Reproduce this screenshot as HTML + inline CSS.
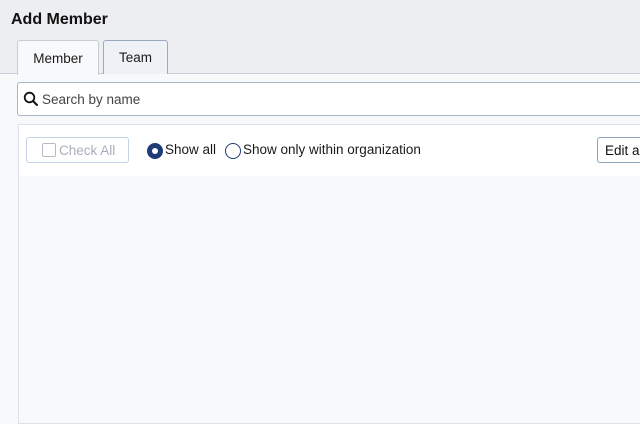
<!DOCTYPE html>
<html><head><style>
*{margin:0;padding:0;box-sizing:border-box}
body{width:640px;height:400px;overflow:hidden;background:#f8f9fb;font-family:"Liberation Sans",sans-serif;position:relative;color:#1a1a1a}
.hdr{position:absolute;left:0;top:0;width:640px;height:74px;background:#eceef2;border-bottom:1px solid #c9ced6}
.title{position:absolute;left:11px;top:11px;font-size:16px;font-weight:bold;color:#111}
.tab{position:absolute;top:40px;height:34px;font-size:13.5px;display:flex;align-items:center;justify-content:center;border-radius:3px 3px 0 0}
.t1{left:17px;width:82px;background:#f8f9fb;border:1px solid #c9ced6;border-bottom:none;height:35px}
.t2{left:103px;width:65px;background:#eef1f6;border:1px solid #9aaac3;border-bottom:none}
.search{position:absolute;left:17px;top:82px;width:640px;height:34px;background:#fff;border:1px solid #a9b4c4;border-radius:3px;display:flex;align-items:center;font-size:13.5px;color:#444}
.card{position:absolute;left:18px;top:124px;width:640px;height:300px;border:1px solid #dde2ea;border-right:none;background:#f8f9fb}
.bar{position:absolute;left:0;top:0;width:100%;height:51px;background:#fff}
.btn{position:absolute;top:12px;height:26px;border:1px solid #c5d3e8;border-radius:3px;font-size:13.5px;display:flex;align-items:center}
.radio{position:absolute;top:18px;width:16px;height:16px;border-radius:50%}
.lbl{position:absolute;top:17px;font-size:13.5px}
</style></head><body>
<div class="hdr"><div class="title">Add Member</div>
<div class="tab t1">Member</div><div class="tab t2">Team</div></div>
<div class="search"><svg width="16" height="16" style="margin:0 3px 0 5px" viewBox="0 0 16 16"><circle cx="6.5" cy="6.5" r="4.8" fill="none" stroke="#111" stroke-width="1.8"/><path d="M10 10l4 4" stroke="#111" stroke-width="2" stroke-linecap="round"/></svg>Search by name</div>
<div class="card"><div class="bar">
<div class="btn" style="left:7px;width:103px;color:#a8afba"><span style="display:inline-block;width:14px;height:14px;border:1px solid #b5bcc8;border-radius:2px;margin:0 3px 0 15px"></span>Check All</div>
<div class="radio" style="left:128px;background:#1e3a78"><div style="position:absolute;left:5px;top:5px;width:6px;height:6px;border-radius:50%;background:#fff"></div></div>
<div class="lbl" style="left:146px">Show all</div>
<div class="radio" style="left:206px;border:1.5px solid #1e3a78;background:#fff"></div>
<div class="lbl" style="left:224px">Show only within organization</div>
<div class="btn" style="left:578px;width:80px;border-color:#8fa3bf;color:#111;padding-left:7px">Edit all</div>
</div></div>
</body></html>
